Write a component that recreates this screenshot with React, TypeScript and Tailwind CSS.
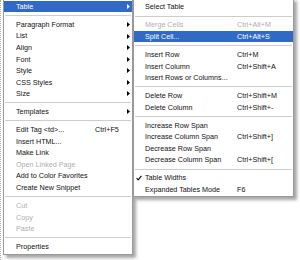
import React from "react";

type Item =
  | { sep: true }
  | {
      sep?: false;
      label: string;
      shortcut?: string;
      arrow?: boolean;
      disabled?: boolean;
      active?: boolean;
      checked?: boolean;
    };

const mainItems: Item[] = [
  { label: "Table", arrow: true, active: true },
  { sep: true },
  { label: "Paragraph Format", arrow: true },
  { label: "List", arrow: true },
  { label: "Align", arrow: true },
  { label: "Font", arrow: true },
  { label: "Style", arrow: true },
  { label: "CSS Styles", arrow: true },
  { label: "Size", arrow: true },
  { sep: true },
  { label: "Templates", arrow: true },
  { sep: true },
  { label: "Edit Tag <td>...", shortcut: "Ctrl+F5" },
  { label: "Insert HTML..." },
  { label: "Make Link" },
  { label: "Open Linked Page", disabled: true },
  { label: "Add to Color Favorites" },
  { label: "Create New Snippet" },
  { sep: true },
  { label: "Cut", disabled: true },
  { label: "Copy", disabled: true },
  { label: "Paste", disabled: true },
  { sep: true },
  { label: "Properties" },
];

const subItems: Item[] = [
  { label: "Select Table" },
  { sep: true },
  { label: "Merge Cells", shortcut: "Ctrl+Alt+M", disabled: true },
  { label: "Split Cell...", shortcut: "Ctrl+Alt+S", active: true },
  { sep: true },
  { label: "Insert Row", shortcut: "Ctrl+M" },
  { label: "Insert Column", shortcut: "Ctrl+Shift+A" },
  { label: "Insert Rows or Columns..." },
  { sep: true },
  { label: "Delete Row", shortcut: "Ctrl+Shift+M" },
  { label: "Delete Column", shortcut: "Ctrl+Shift+-" },
  { sep: true },
  { label: "Increase Row Span" },
  { label: "Increase Column Span", shortcut: "Ctrl+Shift+]" },
  { label: "Decrease Row Span" },
  { label: "Decrease Column Span", shortcut: "Ctrl+Shift+[" },
  { sep: true },
  { label: "Table Widths", checked: true },
  { label: "Expanded Tables Mode", shortcut: "F6" },
];

function Arrow({ white }: { white?: boolean }) {
  return (
    <svg width="3" height="5" viewBox="0 0 3 5" className="shrink-0">
      <path d="M0 0 L3 2.5 L0 5 Z" fill={white ? "#ffffff" : "#000000"} />
    </svg>
  );
}

function Check() {
  return (
    <svg width="6" height="6" viewBox="0 0 6 6" className="shrink-0">
      <path d="M0.6 3.2 L2.2 4.9 L5.4 0.8" fill="none" stroke="#000" strokeWidth="1.1" />
    </svg>
  );
}

function Menu({
  items,
  checkW,
  labelW,
  className,
}: {
  items: Item[];
  checkW: string;
  labelW: string;
  className: string;
}) {
  return (
    <div className={className}>
      {items.map((it, i) => {
        if (it.sep) {
          return (
            <div key={i} className="h-[6.5px] flex items-center px-[1px]">
              <div className="h-px w-full bg-[#cfcdc8]" />
            </div>
          );
        }
        const color = it.active
          ? "text-white"
          : it.disabled
          ? "text-[#aeadb0]"
          : "text-[#111]";
        return (
          <div
            key={i}
            className={`h-[11.55px] flex items-center pr-[2px] ${
              it.active ? "bg-[#316ac5]" : ""
            } ${color}`}
          >
            <div className={`${checkW} shrink-0 flex items-center pl-[2px]`}>
              {it.checked ? <Check /> : null}
            </div>
            <div className={`${labelW} shrink-0 whitespace-nowrap`}>{it.label}</div>
            <div className="flex-1 whitespace-nowrap">{it.shortcut ?? ""}</div>
            {it.arrow ? <Arrow white={it.active} /> : null}
          </div>
        );
      })}
    </div>
  );
}

export default function App() {
  return (
    <div
      className="relative w-[300px] h-[260px] overflow-hidden bg-white text-[7.2px] leading-none"
      style={{ fontFamily: '"Liberation Sans", Arial, sans-serif' }}
    >
      <div className="absolute left-0 top-0 h-full w-[2px] border-l border-dotted border-[#9fb59f]" />
      <Menu
        items={mainItems}
        checkW="w-[12px]"
        labelW="w-[79px]"
        className="absolute left-[3px] top-[-2.3px] w-[130px] border border-[#9a9a9a] bg-white pt-[2px] pb-[1px] shadow-[3px_3px_3px_rgba(0,0,0,0.35)]"
      />
      <Menu
        items={subItems}
        checkW="w-[11px]"
        labelW="w-[92px]"
        className="absolute left-[133px] top-[-1.8px] w-[161px] border border-[#9a9a9a] bg-white pt-[2px] pb-[1px] shadow-[3px_3px_3px_rgba(0,0,0,0.35)]"
      />
    </div>
  );
}
